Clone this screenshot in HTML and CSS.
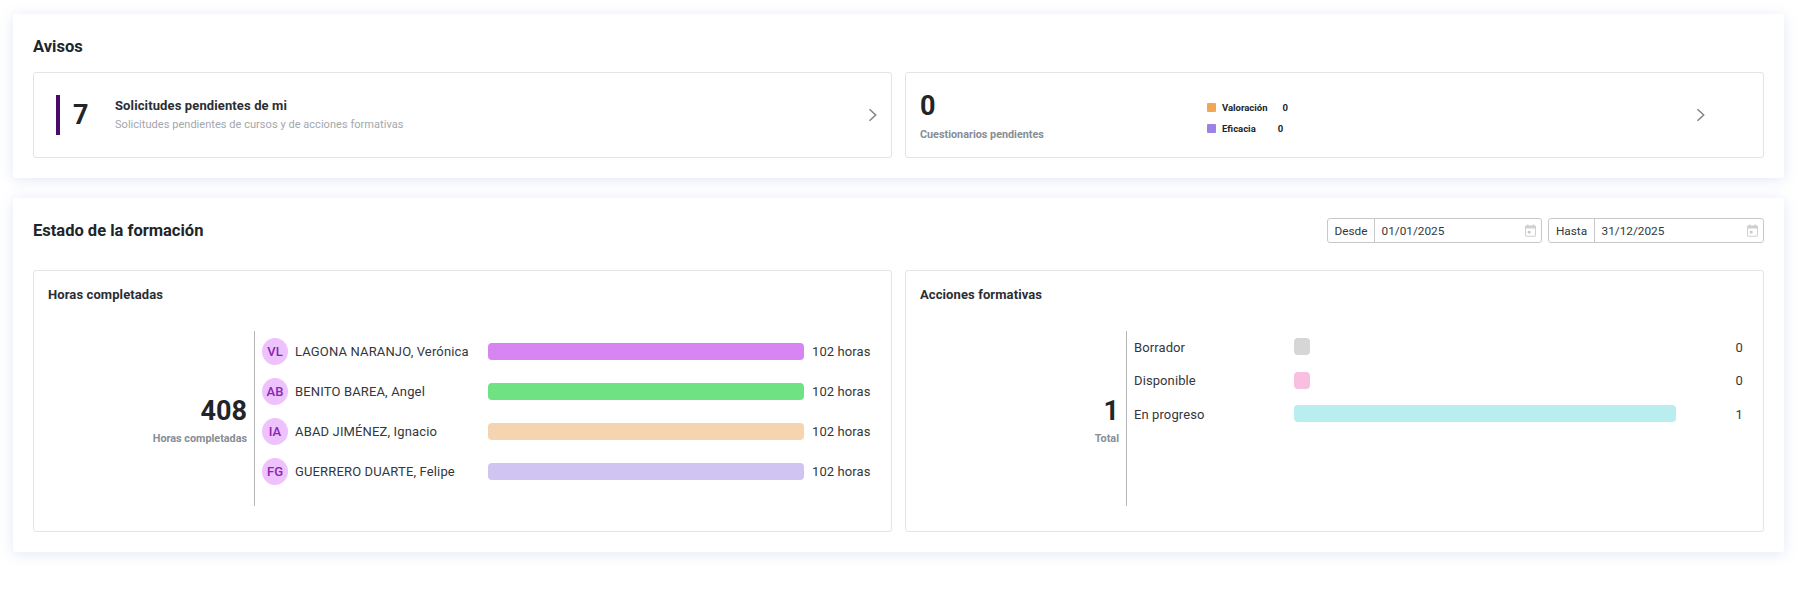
FILE: index.html
```html
<!DOCTYPE html>
<html lang="es">
<head>
<meta charset="utf-8">
<title>Panel</title>
<link rel="stylesheet" href="styles.css">
</head>
<body>
<main class="page">
  <section class="panel panel-avisos">
    <h2 class="panel-title avisos-title">Avisos</h2>
    <div class="columns">
      <article class="box notice">
        <span class="notice-mark"></span>
        <span class="big notice-num">7</span>
        <div class="notice-text">
          <div class="notice-head">Solicitudes pendientes de mi</div>
          <div class="notice-sub">Solicitudes pendientes de cursos y de acciones formativas</div>
        </div>
        <svg class="chev chev-a" width="10" height="14" viewBox="0 0 10 14"><path d="M1.5 1.2 L7.7 7 L1.5 12.8" fill="none" stroke="#7d848c" stroke-width="1.5"/></svg>
      </article>
      <article class="box quest">
        <div class="quest-main">
          <span class="big">0</span>
          <span class="muted quest-label">Cuestionarios pendientes</span>
        </div>
        <div class="legend">
          <div class="legend-row"><i class="sw sw-orange"></i><b>Valoración</b><b class="legend-v1">0</b></div>
          <div class="legend-row"><i class="sw sw-purple"></i><b>Eficacia</b><b class="legend-v2">0</b></div>
        </div>
        <svg class="chev chev-b" width="10" height="14" viewBox="0 0 10 14"><path d="M1.5 1.2 L7.7 7 L1.5 12.8" fill="none" stroke="#7d848c" stroke-width="1.5"/></svg>
      </article>
    </div>
  </section>

  <section class="panel panel-estado">
    <header class="estado-head">
      <h2 class="panel-title">Estado de la formación</h2>
      <div class="dates">
        <div class="date date-a"><span class="date-label">Desde</span><span class="date-val">01/01/2025</span>
          <svg width="11" height="13" viewBox="0 0 12 14"><path d="M3 0.5V2.5M9 0.5V2.5" stroke="#c9c9c9" stroke-width="1.4"/><rect x="0.6" y="2" width="10.8" height="11.2" rx="1" fill="none" stroke="#cfcfcf" stroke-width="1.1"/><rect x="0.6" y="2" width="10.8" height="2.8" fill="#cfcfcf"/><rect x="3" y="7.4" width="3" height="2.8" fill="#c9c9c9"/></svg>
        </div>
        <div class="date date-b"><span class="date-label">Hasta</span><span class="date-val">31/12/2025</span>
          <svg width="11" height="13" viewBox="0 0 12 14"><path d="M3 0.5V2.5M9 0.5V2.5" stroke="#c9c9c9" stroke-width="1.4"/><rect x="0.6" y="2" width="10.8" height="11.2" rx="1" fill="none" stroke="#cfcfcf" stroke-width="1.1"/><rect x="0.6" y="2" width="10.8" height="2.8" fill="#cfcfcf"/><rect x="3" y="7.4" width="3" height="2.8" fill="#c9c9c9"/></svg>
        </div>
      </div>
    </header>
    <div class="columns">
      <article class="box chart">
        <h3 class="chart-title">Horas completadas</h3>
        <div class="chart-body">
          <div class="total total-hours">
            <span class="big">408</span>
            <span class="muted">Horas completadas</span>
          </div>
          <div class="people">
            <div class="person"><span class="avatar">VL</span><span class="name">LAGONA NARANJO, Verónica</span><span class="bar c-purple"></span><span class="val">102 horas</span></div>
            <div class="person"><span class="avatar">AB</span><span class="name">BENITO BAREA, Angel</span><span class="bar c-green"></span><span class="val">102 horas</span></div>
            <div class="person"><span class="avatar">IA</span><span class="name">ABAD JIMÉNEZ, Ignacio</span><span class="bar c-peach"></span><span class="val">102 horas</span></div>
            <div class="person"><span class="avatar">FG</span><span class="name">GUERRERO DUARTE, Felipe</span><span class="bar c-lav"></span><span class="val">102 horas</span></div>
          </div>
        </div>
      </article>
      <article class="box chart">
        <h3 class="chart-title">Acciones formativas</h3>
        <div class="chart-body">
          <div class="total total-actions">
            <span class="big">1</span>
            <span class="muted">Total</span>
          </div>
          <div class="states">
            <div class="state"><span class="state-name">Borrador</span><span class="track"><span class="bar c-grey" style="width:16px"></span></span><span class="state-val">0</span></div>
            <div class="state"><span class="state-name">Disponible</span><span class="track"><span class="bar c-pink" style="width:16px"></span></span><span class="state-val">0</span></div>
            <div class="state"><span class="state-name">En progreso</span><span class="track"><span class="bar c-cyan" style="width:382px"></span></span><span class="state-val">1</span></div>
          </div>
        </div>
      </article>
    </div>
  </section>
</main>
</body>
</html>
```
FILE: styles.css
```css
* { box-sizing: border-box; }
html, body { margin: 0; background: #fff; }
body { font-family: Roboto, "Liberation Sans", sans-serif; color: #212529; }
.page { display: flex; flex-direction: column; gap: 20px; padding: 14px 25px 0 13px; min-height: 100vh; }

.panel {
  background: #fff;
  border-radius: 3px;
  box-shadow: 0 2px 14px rgba(100, 130, 210, .18);
  padding: 0 20px;
}
.panel-avisos { height: 164px; }
.panel-estado { height: 354px; }
.panel-title { margin: 0; font-size: 16.5px; line-height: 20px; font-weight: 700; color: #212529; }
.avisos-title { padding: 23px 0 15px; }

.columns { display: grid; grid-template-columns: 1fr 1fr; gap: 13px; }
.box { min-width: 0; background: #fff; border: 1px solid #e3e4e6; border-radius: 3px; }

.big { font-size: 27px; line-height: 32px; font-weight: 700; color: #212529; }
.muted { font-size: 10.8px; line-height: 14px; font-weight: 700; color: #868e96; }

.notice { height: 86px; display: flex; align-items: center; padding-left: 22px; }
.notice-mark { width: 4px; height: 40px; background: #4a0a66; }
.notice-num { margin-left: 13px; width: 42px; }
.notice-text { flex: 1; }
.notice-head { font-size: 13px; letter-spacing: .12px; line-height: 18px; font-weight: 700; color: #2b2e33; }
.notice-sub { font-size: 11px; letter-spacing: .04px; line-height: 16px; color: #a2a7ad; margin-top: 2px; }
.chev-a { margin-right: 13px; flex: none; }

.quest { height: 86px; display: flex; align-items: center; padding-left: 14px; }
.quest-main { display: flex; flex-direction: column; width: 287px; padding-top: 1px; }
.quest-label { margin-top: 6px; }
.legend { display: flex; flex-direction: column; gap: 9px; width: 489px; padding-top: 6px; }
.legend-row { display: flex; align-items: center; height: 12px; font-size: 9.5px; line-height: 12px; color: #212529; }
.legend-row b { font-weight: 700; }
.sw { width: 9px; height: 9px; border-radius: 1px; margin-right: 6px; }
.sw-orange { background: #f1a555; }
.sw-purple { background: #9d82e6; }
.legend-v1 { margin-left: 15px; }
.legend-v2 { margin-left: 22px; }
.chev { display: block; }

.estado-head { display: flex; justify-content: space-between; align-items: center; height: 65px; margin-bottom: 7px; }
.dates { display: flex; gap: 6px; }
.date {
  height: 25px; display: flex; align-items: center;
  border: 1px solid #c6c8ca; border-radius: 3px;
  font-size: 11.8px; color: #33373c;
}
.date-a { width: 215px; }
.date-b { width: 216px; }
.date-label { height: 100%; display: flex; align-items: center; justify-content: center; border-right: 1px solid #c6c8ca; }
.date-a .date-label { width: 47px; }
.date-b .date-label { width: 46px; }
.date-val { flex: 1; padding-left: 6.5px; }
.date svg { margin-right: 5px; }

.chart { height: 262px; padding: 0 0 0 14px; }
.chart-title { margin: 0; padding-top: 15px; height: 60px; font-size: 13px; letter-spacing: .1px; line-height: 18px; font-weight: 700; color: #2b2e33; }
.chart-body { display: flex; height: 175px; }
.total { display: flex; flex-direction: column; align-items: flex-end; justify-content: center; padding: 2px 7px 0 0; border-right: 1px solid #b4b6b8; }
.total-hours { width: 207px; }
.total-actions { width: 207px; }
.total .big { line-height: 36px; }
.total .muted { margin-top: 3px; }

.people { display: flex; flex-direction: column; gap: 13px; padding: 7px 0 0 7px; }
.person { display: flex; align-items: center; height: 27px; font-size: 13px; letter-spacing: .15px; color: #33373c; }
.avatar {
  width: 26px; height: 27px; border-radius: 50%;
  background: #eec2fd; color: #8a25b5;
  display: flex; align-items: center; justify-content: center;
  font-size: 13px; letter-spacing: 0; font-weight: 500; margin-right: 7px;
}
.name { width: 193px; padding-bottom: 1px; }
.bar { display: block; height: 17px; border-radius: 4px; }
.person .bar { width: 316px; margin-right: 8px; }
.val { white-space: nowrap; padding-bottom: 1px; letter-spacing: .1px; }
.c-purple { background: #d685f2; }
.c-green { background: #6fe384; }
.c-peach { background: #f6d4b0; }
.c-lav { background: #d0c4f2; }
.c-grey { background: #d6d6d6; }
.c-pink { background: #f8bfe0; }
.c-cyan { background: #b9eef0; }

.states { flex: 1; display: flex; flex-direction: column; gap: 16.5px; padding: 7px 20px 0 7px; }
.state { display: flex; align-items: center; height: 17px; font-size: 13px; letter-spacing: .1px; color: #33373c; }
.state-name { width: 160px; padding-top: 1px; }
.track { flex: 1; }
.state-val { width: 20px; text-align: right; padding-top: 1px; }
```
